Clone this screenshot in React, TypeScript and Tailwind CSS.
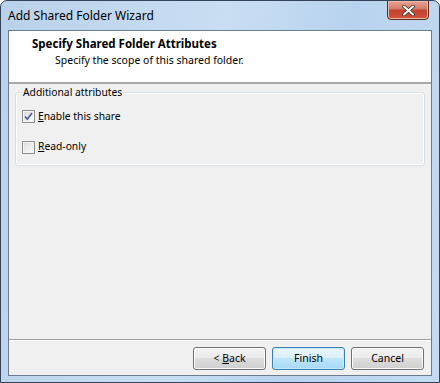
import React from "react";

function CheckBox({ checked }: { checked?: boolean }) {
  return (
    <span className="flex h-[13px] w-[13px] shrink-0 items-center justify-center border border-[#8e8f8f] bg-white">
      <span className="flex h-[11px] w-[11px] items-center justify-center border border-[#f4f4f4] bg-gradient-to-br from-[#dcdcdc] to-[#fbfbfb]">
        {checked && (
          <svg width="9" height="9" viewBox="0 0 9 9">
            <path d="M1 4.5 L3.3 7.2 L8 1" fill="none" stroke="#4a5f97" strokeWidth="1.7" />
          </svg>
        )}
      </span>
    </span>
  );
}

function Button({ children, primary }: { children: React.ReactNode; primary?: boolean }) {
  return (
    <button
      className={
        "h-[23px] w-[73px] rounded-[3px] border text-[10.5px] text-black " +
        (primary
          ? "border-[#3c7fb1] bg-[linear-gradient(#eaf6fd_0%,#d9f0fc_50%,#bee6fd_50%,#a7d9f5_100%)] shadow-[inset_0_0_0_1px_#c4eafd]"
          : "border-[#707070] bg-[linear-gradient(#f2f2f2_0%,#ebebeb_50%,#dddddd_50%,#cfcfcf_100%)] shadow-[inset_0_0_0_1px_#fbfbfb]")
      }
    >
      {children}
    </button>
  );
}

export default function App() {
  return (
    <div
      className="flex h-[383px] w-[440px] flex-col overflow-hidden rounded-t-[7px] border border-[#34445a] bg-[linear-gradient(100deg,#b9d1ea_0%,#c9def3_45%,#b8d3ee_70%,#c4dbf2_100%)] text-[10.3px] text-black"
      style={{ fontFamily: '"Noto Sans", "Open Sans", sans-serif' }}
    >
      <div className="relative flex h-[29px] shrink-0 items-center pl-[7px] text-[12px]">
        Add Shared Folder Wizard
        <div className="absolute right-[10px] top-[-1px] flex h-[20px] w-[42px] items-center justify-center rounded-b-[4px] border border-[#5a2a23] bg-[linear-gradient(#e8a594_0%,#d2796a_45%,#c2422e_50%,#d0533b_100%)] shadow-[inset_0_0_0_1px_#f0b9a8]">
          <svg width="13" height="11" viewBox="0 0 13 11">
            <path d="M2 1.5 L11 9.5 M11 1.5 L2 9.5" stroke="#3d2a26" strokeWidth="3.6" strokeLinecap="round" />
            <path d="M2 1.5 L11 9.5 M11 1.5 L2 9.5" stroke="#ffffff" strokeWidth="2" strokeLinecap="round" />
          </svg>
        </div>
      </div>

      <div className="mx-[7px] mb-[6px] flex flex-1 flex-col border border-[#6c7c8f] bg-[#f0f0f0]">
        <div className="h-[53px] shrink-0 border-b-2 border-[#a8a8a8] bg-white pl-[23px] pt-[5px]">
          <div className="text-[11.5px] font-bold leading-[16px]">Specify Shared Folder Attributes</div>
          <div className="pl-[23px] leading-[17px] text-[10.5px]">Specify the scope of this shared folder.</div>
        </div>

        <div className="flex-1 pl-[6px] pr-[6px] pt-[1px]">
          <fieldset className="h-[81px] rounded-[3px] border border-[#d5dfe5] px-[6px] shadow-[inset_0_0_0_1px_#ffffff]">
            <legend className="px-[1px] leading-[15px]">Additional attributes</legend>
            <label className="mt-[9px] flex items-center gap-[3px]">
              <CheckBox checked />
              <span>
                <span className="underline">E</span>nable this share
              </span>
            </label>
            <label className="mt-[15px] flex items-center gap-[3px]">
              <CheckBox />
              <span>
                <span className="underline">R</span>ead-only
              </span>
            </label>
          </fieldset>
        </div>

        <div className="flex h-[36px] shrink-0 items-start justify-end gap-[6px] border-t border-[#a0a0a0] pr-[7px] pt-[7px] shadow-[inset_0_1px_0_#ffffff]">
          <Button>
            &lt; <span className="underline">B</span>ack
          </Button>
          <Button primary>Finish</Button>
          <Button>Cancel</Button>
        </div>
      </div>
    </div>
  );
}
